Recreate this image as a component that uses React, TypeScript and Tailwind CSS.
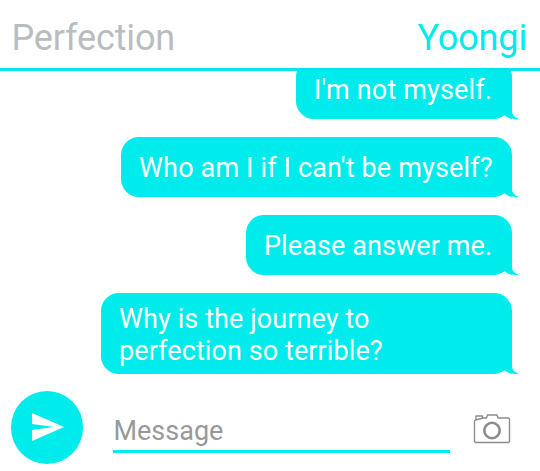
import React from "react";

type Message = {
    id: number;
    lines: string[];
    size: string;
};

const messages: Message[] = [
    { id: 1, lines: ["I'm not myself."], size: "w-[216px] h-[60px] pt-[15px] tracking-[0.15px]" },
    { id: 2, lines: ["Who am I if I can't be myself?"], size: "w-[391px] h-[60px] pt-[15px] tracking-[0.16px]" },
    { id: 3, lines: ["Please answer me."], size: "w-[266px] h-[60px] pt-[15px] tracking-[0.09px]" },
    { id: 4, lines: ["Why is the journey to", "perfection so terrible?"], size: "w-[411px] h-[81px] pt-[10px] tracking-[0.09px]" },
];

const Bubble: React.FC<{ message: Message }> = ({ message }) => (
    <div className={`relative shrink-0 rounded-[18px] rounded-br-none bg-[#00ebeb] pl-[18px] text-[27px] leading-[32px] text-white ${message.size}`}>
        {message.lines.map(line => (
            <p key={line} className="whitespace-nowrap">{line}</p>
        ))}
        {/* tail: white notch under the corner, then the curved tip */}
        <svg className="absolute bottom-0 -right-[7px]" width="24" height="10" viewBox="0 0 24 10">
            <path d="M0 10C3.5 9.6 6.5 8.6 9.5 6.3C12 8.3 15 9.5 18 10Z" fill="#fff" />
            <path d="M15 2H17C17.3 6 19.5 8.4 24 9.7C20 10.3 15.5 9.4 12.5 8Z" fill="#00ebeb" />
        </svg>
    </div>
);

const SendIcon = () => (
    <svg width="32" height="28" viewBox="0 0 32 28" fill="#fff">
        <path d="M0 0L32 14L0 28V17L22 14L0 11Z" />
    </svg>
);

const CameraIcon = () => (
    <svg width="38" height="31" viewBox="0 0 38 31" fill="none" stroke="#8c8c8c" strokeWidth="1.4" strokeLinejoin="round">
        <path d="M2.5 7L10.5 5H13.5L14.5 2H24L25 5H35.5L36.5 6V28.5L35.5 29.5H2.5L1.5 28.5V8Z" />
        <path d="M3 6.5V3H9.5V5" />
        <circle cx="19" cy="17.5" r="7.7" strokeWidth="2.6" />
    </svg>
);

const App: React.FC = () => {
    return (
        <div className="flex h-[471px] w-[540px] flex-col overflow-hidden bg-white font-[Roboto,sans-serif]">
            <header className="flex h-[71px] shrink-0 justify-between border-b-3 border-[#00e6ea] pt-[17px] pr-[13px] pl-[11.5px] text-[36px] leading-[42px] tracking-[-0.15px]">
                <h1 className="text-[#babdc0]">Perfection</h1>
                <h2 className="text-[#00ebeb]">Yoongi</h2>
            </header>

            <main className="flex h-[303px] shrink-0 flex-col items-end justify-end gap-[18px] overflow-hidden pr-[28px]">
                {messages.map(message => (
                    <Bubble key={message.id} message={message} />
                ))}
            </main>

            <footer className="flex flex-1 items-start pt-[17px] pl-[11px]">
                <button className="mt-[0.4px] ml-[0.2px] flex size-[72.2px] items-center justify-center rounded-full bg-[#00ebeb] pl-[1px]">
                    <SendIcon />
                </button>
                <div className="ml-[29.6px] h-[62px] w-[337px] border-b-3 border-[#00ebeb] pt-[24px] pl-[0.5px] text-[27px] leading-[32px] text-[#999]">
                    Message
                </div>
                <div className="mt-[22px] ml-[23px]">
                    <CameraIcon />
                </div>
            </footer>
        </div>
    );
};

export default App;
